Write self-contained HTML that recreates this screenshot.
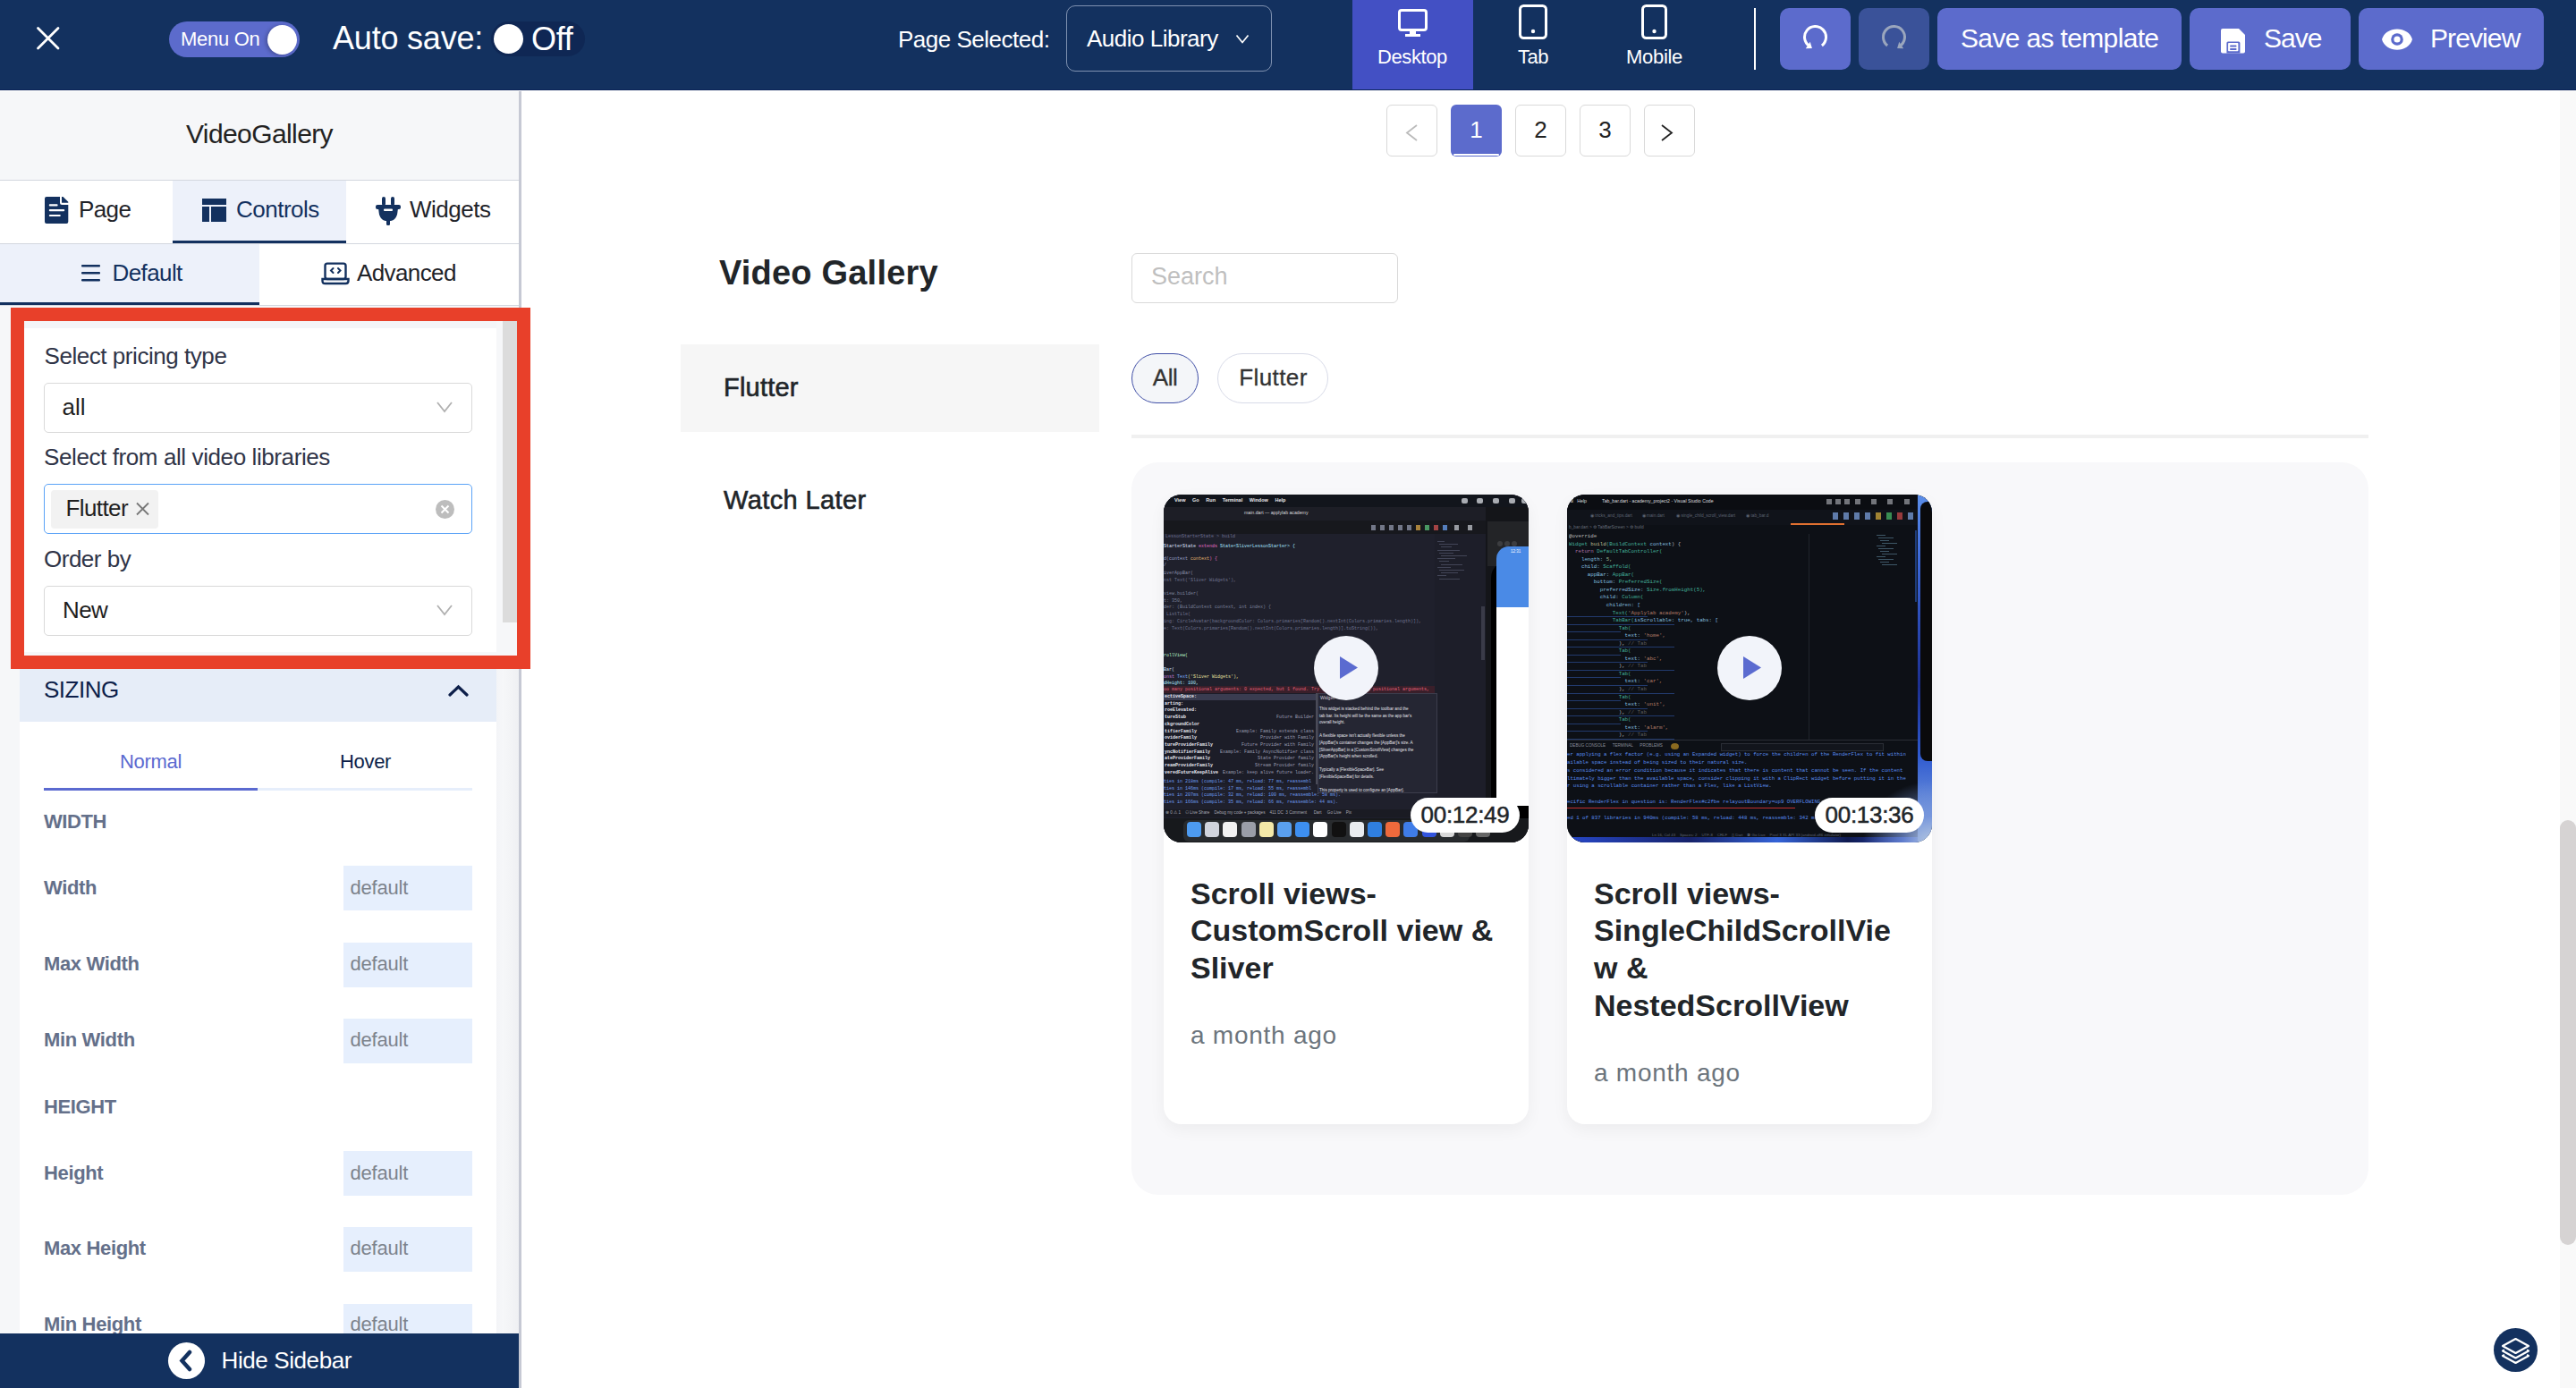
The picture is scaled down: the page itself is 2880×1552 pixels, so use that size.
<!DOCTYPE html>
<html><head><meta charset="utf-8"><title>Video Gallery Editor</title>
<style>
html,body{margin:0;padding:0;}
body{width:2880px;height:1552px;position:relative;overflow:hidden;background:#fff;font-family:"Liberation Sans",sans-serif;}
.t{position:absolute;white-space:nowrap;line-height:1;font-family:"Liberation Sans",sans-serif;}
svg{overflow:visible}
</style></head><body>
<div style="position:absolute;left:0px;top:0px;width:2880px;height:101px;background:#13315f"></div><div style="position:absolute;left:0px;top:100px;width:2880px;height:1px;background:#0a2358"></div><svg style="position:absolute;left:38px;top:27px" width="32" height="32" viewBox="0 0 32 32"><path d="M4.5 4.5 L27 27 M27 4.5 L4.5 27" stroke="#fff" stroke-width="2.8" stroke-linecap="round"/></svg><div style="position:absolute;left:189px;top:24px;width:146px;height:40px;background:#5c6bcc;border-radius:20px"></div><div style="position:absolute;left:299px;top:27.5px;width:33px;height:33.0px;background:#fff;border-radius:50%;box-shadow:-2px 1px 4px rgba(0,0,0,0.25)"></div><div class="t" style="left:202px;top:33.08px;font-size:22px;color:#fff;font-weight:400;letter-spacing:-0.3px;">Menu On</div><div class="t" style="left:372px;top:24.53px;font-size:36px;color:#fff;font-weight:400;letter-spacing:-0.2px;">Auto save:</div><div style="position:absolute;left:549px;top:24px;width:105px;height:39px;background:#0f2754;border-radius:20px"></div><div style="position:absolute;left:552px;top:27px;width:33px;height:33px;background:#fff;border-radius:50%"></div><div class="t" style="left:594px;top:25.53px;font-size:36px;color:#fff;font-weight:400;letter-spacing:-0.3px;">Off</div><div class="t" style="left:1004px;top:30.99px;font-size:26px;color:#fff;font-weight:400;letter-spacing:-0.5px;">Page Selected:</div><div style="position:absolute;left:1192px;top:6px;width:230px;height:74px;border:1.5px solid rgba(200,210,230,0.6);border-radius:10px;box-sizing:border-box"></div><div class="t" style="left:1215px;top:29.99px;font-size:26px;color:#fff;font-weight:400;letter-spacing:-0.5px;">Audio Library</div><svg style="position:absolute;left:1381px;top:37px" width="16" height="14" viewBox="0 0 16 14"><path d="M1.5 2.5 L8 10.5 L14.5 2.5" stroke="#fff" stroke-width="1.7" fill="none"/></svg><div style="position:absolute;left:1512px;top:0px;width:135px;height:100px;background:#4350c4"></div><svg style="position:absolute;left:1560px;top:8px" width="40" height="36" viewBox="0 0 40 36"><rect x="4.5" y="3.5" width="30" height="22" rx="2.5" stroke="#fff" stroke-width="3" fill="none"/><rect x="16" y="26" width="7" height="5" fill="#fff"/><rect x="11" y="30" width="17" height="3" fill="#fff"/></svg><div class="t" style="left:1540px;top:53.08px;font-size:22px;color:#fff;font-weight:400;letter-spacing:-0.4px;">Desktop</div><svg style="position:absolute;left:1696px;top:3px" width="38" height="44" viewBox="0 0 38 44"><rect x="3.5" y="3.5" width="29" height="36" rx="4" stroke="#fff" stroke-width="3" fill="none"/><circle cx="18" cy="32" r="2.2" fill="#fff"/></svg><div class="t" style="left:1697px;top:53.08px;font-size:22px;color:#fff;font-weight:400;letter-spacing:-0.5px;">Tab</div><svg style="position:absolute;left:1833px;top:3px" width="34" height="44" viewBox="0 0 34 44"><rect x="3.5" y="3.5" width="26" height="36" rx="4" stroke="#fff" stroke-width="3" fill="none"/><circle cx="16.5" cy="32" r="2.2" fill="#fff"/></svg><div class="t" style="left:1818px;top:53.08px;font-size:22px;color:#fff;font-weight:400;letter-spacing:-0.3px;">Mobile</div><div style="position:absolute;left:1961px;top:9px;width:2px;height:69px;background:#fff"></div><div style="position:absolute;left:1990px;top:9px;width:79px;height:69px;background:#5c6bcc;border-radius:10px"></div><svg style="position:absolute;left:2012px;top:26px" width="36" height="34" viewBox="0 0 36 34"><path d="M24.9 24.96 A12 12 0 1 0 10.96 25.56" stroke="#fff" stroke-width="3" fill="none"/><path d="M13.9 28 L11.73 20.69 L6.83 28.25 Z" fill="#fff"/></svg><div style="position:absolute;left:2078px;top:9px;width:79px;height:69px;background:#3a5299;border-radius:10px"></div><svg style="position:absolute;left:2100px;top:26px" width="36" height="34" viewBox="0 0 36 34"><path d="M10.1 24.96 A12 12 0 1 1 24.04 25.56" stroke="#9aa6bd" stroke-width="3" fill="none"/><path d="M21.1 28 L23.27 20.69 L28.17 28.25 Z" fill="#9aa6bd"/></svg><div style="position:absolute;left:2166px;top:9px;width:273px;height:69px;background:#5c6bcc;border-radius:10px"></div><div class="t" style="left:2192px;top:28.11px;font-size:30px;color:#fff;font-weight:400;letter-spacing:-0.65px;">Save as template</div><div style="position:absolute;left:2448px;top:9px;width:180px;height:69px;background:#5c6bcc;border-radius:10px"></div><svg style="position:absolute;left:2483px;top:32px" width="28" height="28" viewBox="0 0 28 28"><path d="M0 2 Q0 0 2 0 L20 0 L27 7 L27 25.5 Q27 27.5 25 27.5 L2 27.5 Q0 27.5 0 25.5 Z" fill="#fff"/><path d="M6.4 27.6 L6.4 16 Q6.4 14.5 8 14.5 L19.8 14.5 Q21.4 14.5 21.4 16 L21.4 27.6 Z" fill="#5c6bcc"/><rect x="8.1" y="16" width="11.3" height="9.3" rx="0.8" fill="#fff"/><rect x="10.2" y="18.6" width="7.2" height="1.8" rx="0.5" fill="#5c6bcc"/><rect x="10.2" y="22.1" width="7.2" height="1.8" rx="0.5" fill="#5c6bcc"/></svg><div class="t" style="left:2531px;top:27.90px;font-size:30px;color:#fff;font-weight:400;letter-spacing:-1px;">Save</div><div style="position:absolute;left:2637px;top:9px;width:207px;height:69px;background:#5c6bcc;border-radius:10px"></div><svg style="position:absolute;left:2661px;top:30px" width="38" height="28" viewBox="0 0 38 28"><path d="M2 14 C6 -1.5 32 -1.5 36 14 C32 29.5 6 29.5 2 14 Z" fill="#fff"/><circle cx="19" cy="14" r="6.8" fill="#5c6bcc"/><circle cx="19" cy="14" r="3.6" fill="#fff"/></svg><div class="t" style="left:2717px;top:27.90px;font-size:30px;color:#fff;font-weight:400;letter-spacing:-0.9px;">Preview</div><div style="position:absolute;left:0px;top:101px;width:583px;height:1px;background:#fff"></div><div style="position:absolute;left:0px;top:102px;width:580px;height:1450px;background:#f6f7f9"></div><div style="position:absolute;left:580px;top:102px;width:3px;height:1450px;background:#c6c9d4"></div><div class="t" style="left:290px;transform:translateX(-50%);top:134.60px;font-size:30px;color:#222;font-weight:400;letter-spacing:-0.6px;">VideoGallery</div><div style="position:absolute;left:0px;top:201px;width:580px;height:1px;background:#d3d7df"></div><div style="position:absolute;left:0px;top:202px;width:580px;height:70px;background:#fff"></div><div style="position:absolute;left:193px;top:202px;width:194px;height:70px;background:#edf1fa"></div><div style="position:absolute;left:193px;top:269px;width:194px;height:3px;background:#13315f"></div><div style="position:absolute;left:0px;top:272px;width:580px;height:1px;background:#d3d7df"></div><svg style="position:absolute;left:50px;top:220px" width="27" height="30" viewBox="0 0 27 30"><path d="M2 0 L17 0 L17 6.5 Q17 9 19.5 9 L26.3 9 L26.3 28 Q26.3 30 24.3 30 L2 30 Q0 30 0 28 L0 2 Q0 0 2 0 Z" fill="#13315f"/><path d="M19 0 L20.5 0 L26.3 5.8 L26.3 6.8 L19 6.8 Z" fill="#13315f"/><rect x="4.8" y="8.2" width="9.8" height="2.2" rx="1" fill="#fff"/><rect x="4.8" y="14.1" width="17.4" height="2.2" rx="1" fill="#fff"/><rect x="4.8" y="19.9" width="13" height="2.2" rx="1" fill="#fff"/></svg><div class="t" style="left:88px;top:221.19px;font-size:26px;color:#1f2329;font-weight:400;letter-spacing:-0.6px;">Page</div><svg style="position:absolute;left:226px;top:222px" width="27" height="26" viewBox="0 0 27 26"><rect x="0" y="0" width="27" height="7" fill="#13315f"/><rect x="0" y="9" width="8" height="17" fill="#13315f"/><rect x="10" y="9" width="17" height="17" fill="#13315f"/></svg><div class="t" style="left:264px;top:220.59px;font-size:26px;color:#13315f;font-weight:400;letter-spacing:-0.5px;">Controls</div><svg style="position:absolute;left:420px;top:220px" width="29" height="32" viewBox="0 0 29 32"><rect x="7" y="0" width="4" height="10" rx="2" fill="#13315f"/><rect x="17" y="0" width="4" height="10" rx="2" fill="#13315f"/><rect x="0" y="9" width="28" height="5" rx="2" fill="#13315f"/><path d="M3 13 L25 13 L24 20 Q22 26 17 27 L11 27 Q6 26 4 20 Z" fill="#13315f"/><rect x="12" y="25" width="4" height="7" rx="1.5" fill="#13315f"/><rect x="9" y="13.5" width="10" height="2.5" rx="1" fill="#fff"/></svg><div class="t" style="left:458px;top:220.59px;font-size:26px;color:#1f2329;font-weight:400;letter-spacing:-0.5px;">Widgets</div><div style="position:absolute;left:0px;top:273px;width:580px;height:68px;background:#fff"></div><div style="position:absolute;left:0px;top:273px;width:290px;height:68px;background:#edf1fa"></div><div style="position:absolute;left:0px;top:338px;width:290px;height:3px;background:#13315f"></div><div style="position:absolute;left:0px;top:341px;width:580px;height:1px;background:#d3d7df"></div><svg style="position:absolute;left:90px;top:295px" width="24" height="21" viewBox="0 0 24 21"><rect x="1" y="1" width="21" height="2.6" rx="1" fill="#13315f"/><rect x="1" y="9" width="21" height="2.6" rx="1" fill="#13315f"/><rect x="1" y="17" width="21" height="2.6" rx="1" fill="#13315f"/></svg><div class="t" style="left:125.5px;top:291.99px;font-size:26px;color:#13315f;font-weight:400;letter-spacing:-0.6px;">Default</div><svg style="position:absolute;left:359px;top:291px" width="32" height="28" viewBox="0 0 32 28"><rect x="4.5" y="3.6" width="23" height="17.4" rx="2.5" stroke="#13315f" stroke-width="2.4" fill="none"/><path d="M1.5 21 L30.5 21 L30.5 23 Q30.5 26 27.5 26 L4.5 26 Q1.5 26 1.5 23 Z" stroke="#13315f" stroke-width="2.4" fill="none"/><path d="M13.5 9 L11 11.5 L13.5 14 M19 9 L21.5 11.5 L19 14" stroke="#13315f" stroke-width="2" fill="none" stroke-linecap="round"/></svg><div class="t" style="left:399px;top:291.99px;font-size:26px;color:#1f2329;font-weight:400;letter-spacing:-0.6px;">Advanced</div><div style="position:absolute;left:22px;top:359px;width:533px;height:8px;background:#f4f5f8"></div><div style="position:absolute;left:22px;top:367px;width:533px;height:362px;background:#fff"></div><div style="position:absolute;left:562px;top:350px;width:18px;height:346px;background:#dcdcdc"></div><div class="t" style="left:49.5px;top:384.99px;font-size:26px;color:#2f3447;font-weight:400;letter-spacing:-0.45px;">Select pricing type</div><div style="position:absolute;left:49px;top:428px;width:479px;height:56px;border:1.5px solid #d9d9d9;border-radius:5px;box-sizing:border-box;background:#fff"></div><div class="t" style="left:69.5px;top:441.99px;font-size:26px;color:#1f1f1f;font-weight:400;letter-spacing:0px;">all</div><svg style="position:absolute;left:487px;top:447px" width="20" height="17" viewBox="0 0 20 17"><path d="M2 3 L10 13 L18 3" stroke="#b0b0b0" stroke-width="1.8" fill="none"/></svg><div class="t" style="left:49px;top:498.19px;font-size:26px;color:#2f3447;font-weight:400;letter-spacing:-0.4px;">Select from all video libraries</div><div style="position:absolute;left:49px;top:541px;width:479px;height:56px;border:1.5px solid #5ba3f7;border-radius:5px;box-sizing:border-box;background:#fff"></div><div style="position:absolute;left:57px;top:548px;width:120px;height:43px;background:#f2f2f2;border-radius:4px"></div><div class="t" style="left:73.5px;top:554.99px;font-size:26px;color:#1f1f1f;font-weight:400;letter-spacing:-0.6px;">Flutter</div><svg style="position:absolute;left:151px;top:561px" width="18" height="16" viewBox="0 0 18 16"><path d="M2 1.5 L15 14.5 M15 1.5 L2 14.5" stroke="#777" stroke-width="1.8"/></svg><svg style="position:absolute;left:486px;top:558px" width="23" height="23" viewBox="0 0 23 23"><circle cx="11.5" cy="11.5" r="10.5" fill="#bdbdbd"/><path d="M7.5 7.5 L15.5 15.5 M15.5 7.5 L7.5 15.5" stroke="#fff" stroke-width="2"/></svg><div class="t" style="left:49px;top:612.19px;font-size:26px;color:#2f3447;font-weight:400;letter-spacing:-0.5px;">Order by</div><div style="position:absolute;left:49px;top:655px;width:479px;height:56px;border:1.5px solid #d9d9d9;border-radius:5px;box-sizing:border-box;background:#fff"></div><div class="t" style="left:70px;top:669.39px;font-size:26px;color:#1f1f1f;font-weight:400;letter-spacing:-0.6px;">New</div><svg style="position:absolute;left:487px;top:674px" width="20" height="17" viewBox="0 0 20 17"><path d="M2 3 L10 13 L18 3" stroke="#b0b0b0" stroke-width="1.8" fill="none"/></svg><div style="position:absolute;left:22px;top:748px;width:533px;height:59px;background:#e6edf8"></div><div class="t" style="left:49px;top:758.29px;font-size:26px;color:#0d1f4a;font-weight:400;letter-spacing:-0.5px;">SIZING</div><svg style="position:absolute;left:500px;top:763px" width="25" height="18" viewBox="0 0 25 18"><path d="M3 14 L12.5 5 L22 14" stroke="#0d1f4a" stroke-width="3.2" fill="none" stroke-linecap="round"/></svg><div style="position:absolute;left:555px;top:748px;width:25px;height:743px;background:linear-gradient(90deg,#f3f4f7,#f6f7f9 30%,#eff0f3)"></div><div style="position:absolute;left:22px;top:807px;width:533px;height:745px;background:#fff"></div><div class="t" style="left:168.5px;transform:translateX(-50%);top:841.38px;font-size:22px;color:#5b6ad0;font-weight:400;letter-spacing:-0.3px;">Normal</div><div class="t" style="left:408.5px;transform:translateX(-50%);top:841.38px;font-size:22px;color:#0d1f4a;font-weight:400;letter-spacing:-0.3px;">Hover</div><div style="position:absolute;left:49px;top:881px;width:479px;height:3px;background:#e6eefb"></div><div style="position:absolute;left:49px;top:881px;width:239px;height:3px;background:#5b6ad0"></div><div class="t" style="left:49px;top:907.68px;font-size:22px;color:#64708a;font-weight:700;letter-spacing:-0.4px;">WIDTH</div><div class="t" style="left:49px;top:981.98px;font-size:22px;color:#64708a;font-weight:700;letter-spacing:-0.35px;">Width</div><div style="position:absolute;left:384px;top:968px;width:144px;height:50px;background:#e6effd"></div><div class="t" style="left:391.5px;top:981.98px;font-size:22px;color:#7d838c;font-weight:400;letter-spacing:-0.2px;">default</div><div class="t" style="left:49px;top:1066.98px;font-size:22px;color:#64708a;font-weight:700;letter-spacing:-0.35px;">Max Width</div><div style="position:absolute;left:384px;top:1054px;width:144px;height:50px;background:#e6effd"></div><div class="t" style="left:391.5px;top:1066.98px;font-size:22px;color:#7d838c;font-weight:400;letter-spacing:-0.2px;">default</div><div class="t" style="left:49px;top:1151.98px;font-size:22px;color:#64708a;font-weight:700;letter-spacing:-0.35px;">Min Width</div><div style="position:absolute;left:384px;top:1139px;width:144px;height:50px;background:#e6effd"></div><div class="t" style="left:391.5px;top:1151.98px;font-size:22px;color:#7d838c;font-weight:400;letter-spacing:-0.2px;">default</div><div class="t" style="left:49px;top:1226.68px;font-size:22px;color:#64708a;font-weight:700;letter-spacing:-0.4px;">HEIGHT</div><div class="t" style="left:49px;top:1300.88px;font-size:22px;color:#64708a;font-weight:700;letter-spacing:-0.35px;">Height</div><div style="position:absolute;left:384px;top:1287px;width:144px;height:50px;background:#e6effd"></div><div class="t" style="left:391.5px;top:1300.88px;font-size:22px;color:#7d838c;font-weight:400;letter-spacing:-0.2px;">default</div><div class="t" style="left:49px;top:1385.38px;font-size:22px;color:#64708a;font-weight:700;letter-spacing:-0.35px;">Max Height</div><div style="position:absolute;left:384px;top:1372px;width:144px;height:50px;background:#e6effd"></div><div class="t" style="left:391.5px;top:1385.38px;font-size:22px;color:#7d838c;font-weight:400;letter-spacing:-0.2px;">default</div><div class="t" style="left:49px;top:1469.88px;font-size:22px;color:#64708a;font-weight:700;letter-spacing:-0.35px;">Min Height</div><div style="position:absolute;left:384px;top:1458px;width:144px;height:50px;background:#e6effd"></div><div class="t" style="left:391.5px;top:1469.88px;font-size:22px;color:#7d838c;font-weight:400;letter-spacing:-0.2px;">default</div><div style="position:absolute;left:0px;top:1491px;width:580px;height:61px;background:#13315f"></div><svg style="position:absolute;left:187px;top:1500px" width="43" height="43" viewBox="0 0 43 43"><circle cx="21.5" cy="21.5" r="20.5" fill="#fff"/><path d="M25 12 L16.5 21.5 L25 31" stroke="#13315f" stroke-width="4.5" fill="none" stroke-linecap="round"/></svg><div class="t" style="left:247.5px;top:1507.69px;font-size:26px;color:#fff;font-weight:400;letter-spacing:-0.4px;">Hide Sidebar</div><div style="position:absolute;left:583px;top:101px;width:2279px;height:1451px;background:#fff"></div><div style="position:absolute;left:2862px;top:101px;width:18px;height:1451px;background:#f9f9f9"></div><div style="position:absolute;left:2862px;top:917px;width:18px;height:475px;background:#d6d3d3;border-radius:9px"></div><div style="position:absolute;left:1550px;top:117px;width:57px;height:58px;border:1.5px solid #d9d9d9;border-radius:6px;box-sizing:border-box;background:#fff"></div><div style="position:absolute;left:1622px;top:117px;width:57px;height:58px;background:#5c6bcc;border-radius:6px;overflow:hidden"></div><div style="position:absolute;left:1625px;top:171.5px;width:51px;height:2.0px;background:#fff;border-radius:2px"></div><div style="position:absolute;left:1694px;top:117px;width:57px;height:58px;border:1.5px solid #d9d9d9;border-radius:6px;box-sizing:border-box;background:#fff"></div><div style="position:absolute;left:1766px;top:117px;width:57px;height:58px;border:1.5px solid #d9d9d9;border-radius:6px;box-sizing:border-box;background:#fff"></div><div style="position:absolute;left:1838px;top:117px;width:57px;height:58px;border:1.5px solid #d9d9d9;border-radius:6px;box-sizing:border-box;background:#fff"></div><svg style="position:absolute;left:1570px;top:138px" width="16" height="21" viewBox="0 0 16 21"><path d="M14 2 L3 10.5 L14 19" stroke="#bbb" stroke-width="1.8" fill="none"/></svg><svg style="position:absolute;left:1856px;top:138px" width="16" height="21" viewBox="0 0 16 21"><path d="M2 2 L13 10.5 L2 19" stroke="#222" stroke-width="1.8" fill="none"/></svg><div class="t" style="left:1650.5px;transform:translateX(-50%);top:132.29px;font-size:26px;color:#fff;font-weight:400;letter-spacing:0px;">1</div><div class="t" style="left:1722.5px;transform:translateX(-50%);top:132.29px;font-size:26px;color:#222;font-weight:400;letter-spacing:0px;">2</div><div class="t" style="left:1794.5px;transform:translateX(-50%);top:132.29px;font-size:26px;color:#222;font-weight:400;letter-spacing:0px;">3</div><div class="t" style="left:804px;top:285.63px;font-size:38px;color:#212529;font-weight:700;letter-spacing:0.2px;">Video Gallery</div><div style="position:absolute;left:1265px;top:283px;width:298px;height:56px;border:1.5px solid #d9d9d9;border-radius:6px;box-sizing:border-box"></div><div class="t" style="left:1287px;top:296.14px;font-size:27px;color:#bfbfbf;font-weight:400;letter-spacing:0px;">Search</div><div style="position:absolute;left:761px;top:385px;width:468px;height:98px;background:#f6f6f6"></div><div class="t" style="left:809px;top:419.15px;font-size:29px;color:#212529;font-weight:400;letter-spacing:0.2px;-webkit-text-stroke:0.6px #212529;">Flutter</div><div class="t" style="left:809px;top:544.85px;font-size:29px;color:#212529;font-weight:400;letter-spacing:0.4px;-webkit-text-stroke:0.6px #212529;">Watch Later</div><div style="position:absolute;left:1265px;top:395px;width:75px;height:56px;border:1.5px solid #3f4ea6;border-radius:28px;box-sizing:border-box;background:#f4f6f9"></div><div class="t" style="left:1302.5px;transform:translateX(-50%);top:409.09px;font-size:26px;color:#333;font-weight:400;letter-spacing:-0.5px;-webkit-text-stroke:0.3px #333;">All</div><div style="position:absolute;left:1361px;top:395px;width:124px;height:56px;border:1.5px solid #d8dbe8;border-radius:28px;box-sizing:border-box;background:#fff"></div><div class="t" style="left:1423.5px;transform:translateX(-50%);top:409.49px;font-size:26px;color:#333;font-weight:400;letter-spacing:0.4px;-webkit-text-stroke:0.3px #333;">Flutter</div><div style="position:absolute;left:1265px;top:486px;width:1383px;height:4px;background:#f0f0f0"></div><div style="position:absolute;left:1265px;top:517px;width:1383px;height:819px;background:#f8f8fa;border-radius:30px"></div><div style="position:absolute;left:1301px;top:553px;width:408px;height:704px;background:#fff;border-radius:20px;box-shadow:0 6px 18px rgba(0,0,0,0.05)"></div><div style="position:absolute;left:1301px;top:553px;width:408px;height:389px;border-radius:20px;overflow:hidden;background:#1c1e29"><div style="position:absolute;left:0px;top:0px;width:408px;height:389px;background:#1e1f2b;"></div><div style="position:absolute;left:0px;top:0px;width:408px;height:14px;background:#12151c;"></div><div style="position:absolute;left:12px;top:4px;font:5.5px/1 'Liberation Sans',sans-serif;white-space:pre;color:#e8e8ea;font-weight:bold">View     Go     Run     Terminal     Window     Help</div><div style="position:absolute;left:333px;top:4px;width:7px;height:6px;background:#cfd2d8;border-radius:2px;opacity:0.8"></div><div style="position:absolute;left:350px;top:4px;width:7px;height:6px;background:#cfd2d8;border-radius:2px;opacity:0.8"></div><div style="position:absolute;left:368px;top:4px;width:7px;height:6px;background:#cfd2d8;border-radius:2px;opacity:0.8"></div><div style="position:absolute;left:386px;top:4px;width:7px;height:6px;background:#cfd2d8;border-radius:2px;opacity:0.8"></div><div style="position:absolute;left:400px;top:4px;width:7px;height:6px;background:#cfd2d8;border-radius:2px;opacity:0.8"></div><div style="position:absolute;left:0px;top:14px;width:360px;height:15px;background:#1d1e26;"></div><div style="position:absolute;left:90px;top:18px;font:5.2px/1 'Liberation Sans',sans-serif;white-space:pre;color:#d8d8dc;">main.dart — applylab academy</div><div style="position:absolute;left:0px;top:29px;width:360px;height:15px;background:#17181d;"></div><div style="position:absolute;left:232px;top:34px;width:5px;height:6px;background:#9aa0b5;opacity:0.7"></div><div style="position:absolute;left:242px;top:34px;width:5px;height:6px;background:#9aa0b5;opacity:0.7"></div><div style="position:absolute;left:252px;top:34px;width:5px;height:6px;background:#9aa0b5;opacity:0.7"></div><div style="position:absolute;left:262px;top:34px;width:5px;height:6px;background:#9aa0b5;opacity:0.7"></div><div style="position:absolute;left:272px;top:34px;width:5px;height:6px;background:#9aa0b5;opacity:0.7"></div><div style="position:absolute;left:282px;top:34px;width:5px;height:6px;background:#e8b04a;opacity:0.7"></div><div style="position:absolute;left:292px;top:34px;width:5px;height:6px;background:#5fcf80;opacity:0.7"></div><div style="position:absolute;left:302px;top:34px;width:5px;height:6px;background:#e05555;opacity:0.7"></div><div style="position:absolute;left:312px;top:34px;width:5px;height:6px;background:#6fa8ff;opacity:0.7"></div><div style="position:absolute;left:325px;top:34px;width:5px;height:6px;background:#cfd2d8;opacity:0.7"></div><div style="position:absolute;left:340px;top:34px;width:5px;height:6px;background:#cfd2d8;opacity:0.7"></div><div style="position:absolute;left:0px;top:44px;width:303px;height:312px;background:#1f202c;"></div><div style="position:absolute;left:2px;top:45px;font:5px/1 'Liberation Mono',monospace;white-space:pre;color:#6c6f8c;">LessonStarterState &gt; build</div><div style="position:absolute;left:0px;top:56px;font:5px/1 'Liberation Mono',monospace;white-space:pre;color:#dfe3ff;">StarterState </div><div style="position:absolute;left:39.0px;top:56px;font:5px/1 'Liberation Mono',monospace;white-space:pre;color:#e36fc6;">extends </div><div style="position:absolute;left:63.0px;top:56px;font:5px/1 'Liberation Mono',monospace;white-space:pre;color:#a9e6ff;">State&lt;SliverLessonStarter&gt; {</div><div style="position:absolute;left:0px;top:70px;font:5px/1 'Liberation Mono',monospace;white-space:pre;color:#9aa0c8;">d(context </div><div style="position:absolute;left:30.0px;top:70px;font:5px/1 'Liberation Mono',monospace;white-space:pre;color:#e5b76e;">context</div><div style="position:absolute;left:51.0px;top:70px;font:5px/1 'Liberation Mono',monospace;white-space:pre;color:#e36fc6;">) {</div><div style="position:absolute;left:0px;top:77px;font:5px/1 'Liberation Mono',monospace;white-space:pre;color:#9aa0c8;">/</div><div style="position:absolute;left:0px;top:86px;font:5px/1 'Liberation Mono',monospace;white-space:pre;color:#8b90aa;">iverAppBar(</div><div style="position:absolute;left:0px;top:94px;font:5px/1 'Liberation Mono',monospace;white-space:pre;color:#6f7490;">nst Text(&#x27;Sliver Widgets&#x27;),</div><div style="position:absolute;left:0px;top:109px;font:5px/1 'Liberation Mono',monospace;white-space:pre;color:#7b809a;">view.builder(</div><div style="position:absolute;left:0px;top:117px;font:5px/1 'Liberation Mono',monospace;white-space:pre;color:#7b809a;">t: 350,</div><div style="position:absolute;left:0px;top:124px;font:5px/1 'Liberation Mono',monospace;white-space:pre;color:#7b809a;">der: (BuildContext context, int index) {</div><div style="position:absolute;left:0px;top:132px;font:5px/1 'Liberation Mono',monospace;white-space:pre;color:#6f7490;"> ListTile(</div><div style="position:absolute;left:0px;top:140px;font:5px/1 'Liberation Mono',monospace;white-space:pre;color:#6f7490;">ing: CircleAvatar(backgroundColor: Colors.primaries[Random().nextInt(Colors.primaries.length)]),</div><div style="position:absolute;left:0px;top:148px;font:5px/1 'Liberation Mono',monospace;white-space:pre;color:#6f7490;">e: Text(Colors.primaries[Random().nextInt(Colors.primaries.length)].toString()),</div><div style="position:absolute;left:0px;top:178px;font:5px/1 'Liberation Mono',monospace;white-space:pre;color:#b9f5c8;">rollView(</div><div style="position:absolute;left:0px;top:194px;font:5px/1 'Liberation Mono',monospace;white-space:pre;color:#cfe3ff;">Bar(</div><div style="position:absolute;left:0px;top:202px;font:5px/1 'Liberation Mono',monospace;white-space:pre;color:#c07cd6;">onst </div><div style="position:absolute;left:15.0px;top:202px;font:5px/1 'Liberation Mono',monospace;white-space:pre;color:#7fb0ff;">Text</div><div style="position:absolute;left:27.0px;top:202px;font:5px/1 'Liberation Mono',monospace;white-space:pre;color:#e6e0a0;">(&#x27;Sliver Widgets&#x27;),</div><div style="position:absolute;left:0px;top:209px;font:5px/1 'Liberation Mono',monospace;white-space:pre;color:#b0e8ff;">dHeight: 100,</div><div style="position:absolute;left:303px;top:44px;width:57px;height:312px;background:#1d1e29;"></div><div style="position:absolute;left:306px;top:52.0px;width:8px;height:1px;background:#8a8fb0;opacity:0.35"></div><div style="position:absolute;left:308px;top:55.2px;width:21px;height:1px;background:#8a8fb0;opacity:0.35"></div><div style="position:absolute;left:310px;top:58.4px;width:12px;height:1px;background:#8a8fb0;opacity:0.35"></div><div style="position:absolute;left:306px;top:61.6px;width:25px;height:1px;background:#8a8fb0;opacity:0.35"></div><div style="position:absolute;left:308px;top:64.8px;width:16px;height:1px;background:#8a8fb0;opacity:0.35"></div><div style="position:absolute;left:310px;top:68.0px;width:29px;height:1px;background:#8a8fb0;opacity:0.35"></div><div style="position:absolute;left:306px;top:71.2px;width:20px;height:1px;background:#8a8fb0;opacity:0.35"></div><div style="position:absolute;left:308px;top:74.4px;width:11px;height:1px;background:#8a8fb0;opacity:0.35"></div><div style="position:absolute;left:310px;top:77.6px;width:24px;height:1px;background:#8a8fb0;opacity:0.35"></div><div style="position:absolute;left:306px;top:80.8px;width:15px;height:1px;background:#8a8fb0;opacity:0.35"></div><div style="position:absolute;left:308px;top:84.0px;width:28px;height:1px;background:#8a8fb0;opacity:0.35"></div><div style="position:absolute;left:310px;top:87.2px;width:19px;height:1px;background:#8a8fb0;opacity:0.35"></div><div style="position:absolute;left:306px;top:90.4px;width:10px;height:1px;background:#8a8fb0;opacity:0.35"></div><div style="position:absolute;left:308px;top:93.6px;width:23px;height:1px;background:#8a8fb0;opacity:0.35"></div><div style="position:absolute;left:355px;top:125px;width:4px;height:60px;background:#3a3b48;"></div><div style="position:absolute;left:0px;top:214px;width:303px;height:8px;background:#3a1f2a;"></div><div style="position:absolute;left:0px;top:216px;font:5px/1 'Liberation Mono',monospace;white-space:pre;color:#e0607a;">oo many positional arguments: 0 expected, but 1 found. Try removing the extra positional arguments,</div><div style="position:absolute;left:0px;top:222px;width:170px;height:102px;background:#1c1d28;"></div><div style="position:absolute;left:0px;top:223px;width:170px;height:7px;background:#3a3c50;"></div><div style="position:absolute;left:1px;top:224.0px;font:5px/1 'Liberation Mono',monospace;white-space:pre;color:#e8e8f0;font-weight:bold">ectiveSpace:</div><div style="position:absolute;left:1px;top:231.7px;font:5px/1 'Liberation Mono',monospace;white-space:pre;color:#e8e8f0;font-weight:bold">arting:</div><div style="position:absolute;left:1px;top:239.4px;font:5px/1 'Liberation Mono',monospace;white-space:pre;color:#e8e8f0;font-weight:bold">roeElevated:</div><div style="position:absolute;left:1px;top:247.1px;font:5px/1 'Liberation Mono',monospace;white-space:pre;color:#e8e8f0;font-weight:bold">tureStub</div><div style="position:absolute;left:126px;top:247.1px;font:5px/1 'Liberation Mono',monospace;white-space:pre;color:#9a9cb0;">Future Builder</div><div style="position:absolute;left:1px;top:254.8px;font:5px/1 'Liberation Mono',monospace;white-space:pre;color:#e8e8f0;font-weight:bold">ckgroundColor</div><div style="position:absolute;left:1px;top:262.5px;font:5px/1 'Liberation Mono',monospace;white-space:pre;color:#e8e8f0;font-weight:bold">tifierFamily</div><div style="position:absolute;left:81px;top:262.5px;font:5px/1 'Liberation Mono',monospace;white-space:pre;color:#9a9cb0;">Example: Family extends class</div><div style="position:absolute;left:1px;top:270.2px;font:5px/1 'Liberation Mono',monospace;white-space:pre;color:#e8e8f0;font-weight:bold">oviderFamily</div><div style="position:absolute;left:108px;top:270.2px;font:5px/1 'Liberation Mono',monospace;white-space:pre;color:#9a9cb0;">Provider with Family</div><div style="position:absolute;left:1px;top:277.9px;font:5px/1 'Liberation Mono',monospace;white-space:pre;color:#e8e8f0;font-weight:bold">tureProviderFamily</div><div style="position:absolute;left:87px;top:277.9px;font:5px/1 'Liberation Mono',monospace;white-space:pre;color:#9a9cb0;">Future Provider with Family</div><div style="position:absolute;left:1px;top:285.6px;font:5px/1 'Liberation Mono',monospace;white-space:pre;color:#e8e8f0;font-weight:bold">yncNotifierFamily</div><div style="position:absolute;left:63px;top:285.6px;font:5px/1 'Liberation Mono',monospace;white-space:pre;color:#9a9cb0;">Example: Family AsyncNotifier class</div><div style="position:absolute;left:1px;top:293.3px;font:5px/1 'Liberation Mono',monospace;white-space:pre;color:#e8e8f0;font-weight:bold">ateProviderFamily</div><div style="position:absolute;left:105px;top:293.3px;font:5px/1 'Liberation Mono',monospace;white-space:pre;color:#9a9cb0;">State Provider family</div><div style="position:absolute;left:1px;top:301.0px;font:5px/1 'Liberation Mono',monospace;white-space:pre;color:#e8e8f0;font-weight:bold">reamProviderFamily</div><div style="position:absolute;left:102px;top:301.0px;font:5px/1 'Liberation Mono',monospace;white-space:pre;color:#9a9cb0;">Stream Provider family</div><div style="position:absolute;left:1px;top:308.7px;font:5px/1 'Liberation Mono',monospace;white-space:pre;color:#e8e8f0;font-weight:bold">veredFutureKeepAlive</div><div style="position:absolute;left:66px;top:308.7px;font:5px/1 'Liberation Mono',monospace;white-space:pre;color:#9a9cb0;">Example: keep alive future loader.</div><div style="position:absolute;left:170px;top:222px;width:2px;height:102px;background:#4a4b58;"></div><div style="position:absolute;left:172px;top:222px;width:134px;height:112px;background:#252633;border:1px solid #3c3d4c;box-sizing:border-box"></div><div style="position:absolute;left:175px;top:225px;font:5px/1 'Liberation Sans',sans-serif;white-space:pre;color:#d0d0d8;">Widget</div><div style="position:absolute;left:174px;top:238.0px;font:4.6px/1 'Liberation Sans',sans-serif;white-space:pre;color:#e4e4ea;">This widget is stacked behind the toolbar and the</div><div style="position:absolute;left:174px;top:245.6px;font:4.6px/1 'Liberation Sans',sans-serif;white-space:pre;color:#e4e4ea;">tab bar. Its height will be the same as the app bar&#x27;s</div><div style="position:absolute;left:174px;top:253.2px;font:4.6px/1 'Liberation Sans',sans-serif;white-space:pre;color:#e4e4ea;">overall height.</div><div style="position:absolute;left:174px;top:260.8px;font:4.6px/1 'Liberation Sans',sans-serif;white-space:pre;color:#e4e4ea;"></div><div style="position:absolute;left:174px;top:268.4px;font:4.6px/1 'Liberation Sans',sans-serif;white-space:pre;color:#e4e4ea;">A flexible space isn&#x27;t actually flexible unless the</div><div style="position:absolute;left:174px;top:276.0px;font:4.6px/1 'Liberation Sans',sans-serif;white-space:pre;color:#e4e4ea;">[AppBar]&#x27;s container changes the [AppBar]&#x27;s size. A</div><div style="position:absolute;left:174px;top:283.6px;font:4.6px/1 'Liberation Sans',sans-serif;white-space:pre;color:#e4e4ea;">[SliverAppBar] in a [CustomScrollView] changes the</div><div style="position:absolute;left:174px;top:291.2px;font:4.6px/1 'Liberation Sans',sans-serif;white-space:pre;color:#e4e4ea;">[AppBar]&#x27;s height when scrolled.</div><div style="position:absolute;left:174px;top:298.8px;font:4.6px/1 'Liberation Sans',sans-serif;white-space:pre;color:#e4e4ea;"></div><div style="position:absolute;left:174px;top:306.4px;font:4.6px/1 'Liberation Sans',sans-serif;white-space:pre;color:#e4e4ea;">Typically a [FlexibleSpaceBar]. See</div><div style="position:absolute;left:174px;top:314.0px;font:4.6px/1 'Liberation Sans',sans-serif;white-space:pre;color:#e4e4ea;">[FlexibleSpaceBar] for details.</div><div style="position:absolute;left:174px;top:321.6px;font:4.6px/1 'Liberation Sans',sans-serif;white-space:pre;color:#e4e4ea;"></div><div style="position:absolute;left:174px;top:329.2px;font:4.6px/1 'Liberation Sans',sans-serif;white-space:pre;color:#e4e4ea;">This property is used to configure an [AppBar].</div><div style="position:absolute;left:0px;top:319.0px;font:5px/1 'Liberation Mono',monospace;white-space:pre;color:#6f9cf0;">ties in 218ms (compile: 47 ms, reload: 77 ms, reassembl</div><div style="position:absolute;left:0px;top:326.6px;font:5px/1 'Liberation Mono',monospace;white-space:pre;color:#6f9cf0;">ties in 146ms (compile: 17 ms, reload: 55 ms, reassembl</div><div style="position:absolute;left:0px;top:334.2px;font:5px/1 'Liberation Mono',monospace;white-space:pre;color:#6f9cf0;">ties in 207ms (compile: 32 ms, reload: 100 ms, reassemble: 58 ms).</div><div style="position:absolute;left:0px;top:341.8px;font:5px/1 'Liberation Mono',monospace;white-space:pre;color:#6f9cf0;">ties in 166ms (compile: 35 ms, reload: 66 ms, reassemble: 44 ms).</div><div style="position:absolute;left:0px;top:352px;width:360px;height:9px;background:#1a1b23;"></div><div style="position:absolute;left:2px;top:354px;font:4.6px/1 'Liberation Sans',sans-serif;white-space:pre;color:#a8a9b4;">⊗ 0 ⚠ 1    ⚇ Live Share    Debug my code + packages    411 DC  3 Comment      Dart     Go Live    Pix</div><div style="position:absolute;left:360px;top:14px;width:48px;height:348px;background:#141519;"></div><div style="position:absolute;left:362px;top:30px;width:46px;height:50px;background:#232427;"></div><div style="position:absolute;left:373px;top:52px;width:6px;height:6px;background:#3c3d40;border-radius:50%"></div><div style="position:absolute;left:381px;top:52px;width:6px;height:6px;background:#3c3d40;border-radius:50%"></div><div style="position:absolute;left:389px;top:52px;width:6px;height:6px;background:#3c3d40;border-radius:50%"></div><div style="position:absolute;left:366px;top:75px;width:42px;height:282px;background:#000;border-radius:18px 0 0 18px"></div><div style="position:absolute;left:372px;top:58px;width:36px;height:68px;background:#4a8ae6;border-radius:14px 0 0 0"></div><div style="position:absolute;left:388px;top:62px;font:4.5px/1 'Liberation Sans',sans-serif;white-space:pre;color:#fff;">12:31</div><div style="position:absolute;left:372px;top:126px;width:36px;height:222px;background:#fff;"></div><div style="position:absolute;left:360px;top:354px;width:48px;height:8px;background:#000;"></div><div style="position:absolute;left:0px;top:362px;width:408px;height:27px;background:#17191c;"></div><div style="position:absolute;left:22px;top:364px;width:320px;height:24px;background:#2a2d31;border-radius:6px;opacity:0.9"></div><div style="position:absolute;left:26.0px;top:366px;width:16px;height:17px;background:#4d9bf0;border-radius:4px"></div><div style="position:absolute;left:46.2px;top:366px;width:16px;height:17px;background:#d0d4dc;border-radius:4px"></div><div style="position:absolute;left:66.4px;top:366px;width:16px;height:17px;background:#f2f2f2;border-radius:4px"></div><div style="position:absolute;left:86.6px;top:366px;width:16px;height:17px;background:#9a9ea8;border-radius:4px"></div><div style="position:absolute;left:106.8px;top:366px;width:16px;height:17px;background:#f4e9a8;border-radius:4px"></div><div style="position:absolute;left:127.0px;top:366px;width:16px;height:17px;background:#5aa0ef;border-radius:4px"></div><div style="position:absolute;left:147.2px;top:366px;width:16px;height:17px;background:#3d8ff0;border-radius:4px"></div><div style="position:absolute;left:167.4px;top:366px;width:16px;height:17px;background:#ffffff;border-radius:4px"></div><div style="position:absolute;left:187.6px;top:366px;width:16px;height:17px;background:#111;border-radius:4px"></div><div style="position:absolute;left:207.79999999999998px;top:366px;width:16px;height:17px;background:#e9ecef;border-radius:4px"></div><div style="position:absolute;left:228.0px;top:366px;width:16px;height:17px;background:#2f7fe0;border-radius:4px"></div><div style="position:absolute;left:248.2px;top:366px;width:16px;height:17px;background:#ee6a3c;border-radius:4px"></div><div style="position:absolute;left:268.4px;top:366px;width:16px;height:17px;background:#3f7de8;border-radius:4px"></div><div style="position:absolute;left:288.59999999999997px;top:366px;width:16px;height:17px;background:#3355dd;border-radius:4px"></div><div style="position:absolute;left:308.8px;top:366px;width:16px;height:17px;background:#d8d8d8;border-radius:4px"></div><div style="position:absolute;left:329.0px;top:366px;width:16px;height:17px;background:#444;border-radius:4px"></div><div style="position:absolute;left:349.2px;top:366px;width:16px;height:17px;background:#666;border-radius:4px"></div></div><div style="position:absolute;left:1469px;top:711px;width:72px;height:72px;border-radius:50%;background:#f2f4fa"></div><svg style="position:absolute;left:1497px;top:734px" width="22" height="26" viewBox="0 0 22 26"><path d="M1 0 L21 12.5 L1 25 Z" fill="#5b6bd0"/></svg><div style="position:absolute;left:1577px;top:892px;width:122px;height:39px;background:#fff;border-radius:20px"></div><div class="t" style="left:1638px;transform:translateX(-50%);top:898.49px;font-size:26px;color:#212529;font-weight:400;letter-spacing:-0.3px;-webkit-text-stroke:0.5px #212529;">00:12:49</div><div class="t" style="left:1331px;top:981.62px;font-size:34px;color:#212529;font-weight:700;letter-spacing:0px;">Scroll views-</div><div class="t" style="left:1331px;top:1023.42px;font-size:34px;color:#212529;font-weight:700;letter-spacing:0px;">CustomScroll view &amp;</div><div class="t" style="left:1331px;top:1065.22px;font-size:34px;color:#212529;font-weight:700;letter-spacing:0px;">Sliver</div><div class="t" style="left:1331px;top:1143.90px;font-size:28px;color:#6c757d;font-weight:400;letter-spacing:0.75px;">a month ago</div><div style="position:absolute;left:1752px;top:553px;width:408px;height:704px;background:#fff;border-radius:20px;box-shadow:0 6px 18px rgba(0,0,0,0.05)"></div><div style="position:absolute;left:1752px;top:553px;width:408px;height:389px;border-radius:20px;overflow:hidden;background:#1c1e29"><div style="position:absolute;left:0px;top:0px;width:408px;height:389px;background:#0d1016;"></div><div style="position:absolute;left:0px;top:0px;width:392px;height:17px;background:#0b0d12;"></div><div style="position:absolute;left:0px;top:5px;font:5.2px/1 'Liberation Sans',sans-serif;white-space:pre;color:#d8d9de;">nal   Help            Tab_bar.dart - academy_project2 - Visual Studio Code</div><div style="position:absolute;left:290px;top:5px;width:6px;height:6px;background:#c8cad0;opacity:0.55"></div><div style="position:absolute;left:300px;top:5px;width:6px;height:6px;background:#c8cad0;opacity:0.55"></div><div style="position:absolute;left:310px;top:5px;width:6px;height:6px;background:#c8cad0;opacity:0.55"></div><div style="position:absolute;left:322px;top:5px;width:6px;height:6px;background:#c8cad0;opacity:0.55"></div><div style="position:absolute;left:340px;top:5px;width:6px;height:6px;background:#c8cad0;opacity:0.55"></div><div style="position:absolute;left:358px;top:5px;width:6px;height:6px;background:#c8cad0;opacity:0.55"></div><div style="position:absolute;left:377px;top:5px;width:6px;height:6px;background:#c8cad0;opacity:0.55"></div><div style="position:absolute;left:0px;top:17px;width:392px;height:17px;background:#10131a;"></div><div style="position:absolute;left:26px;top:22px;font:4.8px/1 'Liberation Sans',sans-serif;white-space:pre;color:#5c6270;">◉ tricks_and_tips.dart        ◉ main.dart          ◉ single_child_scroll_view.dart         ◉ tab_bar.d</div><div style="position:absolute;left:250px;top:32px;width:60px;height:2px;background:#e07030;"></div><div style="position:absolute;left:297px;top:20px;width:6px;height:8px;background:#8ab4f8;opacity:0.65"></div><div style="position:absolute;left:309px;top:20px;width:6px;height:8px;background:#8ab4f8;opacity:0.65"></div><div style="position:absolute;left:321px;top:20px;width:6px;height:8px;background:#8ab4f8;opacity:0.65"></div><div style="position:absolute;left:333px;top:20px;width:6px;height:8px;background:#8ab4f8;opacity:0.65"></div><div style="position:absolute;left:345px;top:20px;width:6px;height:8px;background:#f0c040;opacity:0.65"></div><div style="position:absolute;left:357px;top:20px;width:6px;height:8px;background:#50d070;opacity:0.65"></div><div style="position:absolute;left:369px;top:20px;width:6px;height:8px;background:#e05050;opacity:0.65"></div><div style="position:absolute;left:381px;top:20px;width:6px;height:8px;background:#8ab4f8;opacity:0.65"></div><div style="position:absolute;left:2px;top:35px;font:4.8px/1 'Liberation Sans',sans-serif;white-space:pre;color:#676d7a;">b_bar.dart &gt; ⚙ TabBarScreen &gt; ⚙ build</div><div style="position:absolute;left:2px;top:44.0px;font:5.8px/1 'Liberation Mono',monospace;white-space:pre;color:#d4d4d4;opacity:0.85">@override</div><div style="position:absolute;left:2px;top:52.55px;font:5.8px/1 'Liberation Mono',monospace;white-space:pre;color:#4ec9b0;opacity:0.85">Widget </div><div style="position:absolute;left:26.36px;top:52.55px;font:5.8px/1 'Liberation Mono',monospace;white-space:pre;color:#dcdcaa;opacity:0.85">build</div><div style="position:absolute;left:43.76px;top:52.55px;font:5.8px/1 'Liberation Mono',monospace;white-space:pre;color:#4ec9b0;opacity:0.85">(BuildContext </div><div style="position:absolute;left:92.47999999999999px;top:52.55px;font:5.8px/1 'Liberation Mono',monospace;white-space:pre;color:#9cdcfe;opacity:0.85">context</div><div style="position:absolute;left:116.83999999999999px;top:52.55px;font:5.8px/1 'Liberation Mono',monospace;white-space:pre;color:#d4d4d4;opacity:0.85">) {</div><div style="position:absolute;left:2px;top:61.1px;font:5.8px/1 'Liberation Mono',monospace;white-space:pre;color:#c586c0;opacity:0.85">  return </div><div style="position:absolute;left:33.32px;top:61.1px;font:5.8px/1 'Liberation Mono',monospace;white-space:pre;color:#4ec9b0;opacity:0.85">DefaultTabController(</div><div style="position:absolute;left:2px;top:69.65px;font:5.8px/1 'Liberation Mono',monospace;white-space:pre;color:#9cdcfe;opacity:0.85">    length: </div><div style="position:absolute;left:43.76px;top:69.65px;font:5.8px/1 'Liberation Mono',monospace;white-space:pre;color:#b5cea8;opacity:0.85">5,</div><div style="position:absolute;left:2px;top:78.2px;font:5.8px/1 'Liberation Mono',monospace;white-space:pre;color:#9cdcfe;opacity:0.85">    child: </div><div style="position:absolute;left:40.28px;top:78.2px;font:5.8px/1 'Liberation Mono',monospace;white-space:pre;color:#4ec9b0;opacity:0.85">Scaffold(</div><div style="position:absolute;left:2px;top:86.75px;font:5.8px/1 'Liberation Mono',monospace;white-space:pre;color:#9cdcfe;opacity:0.85">      appBar: </div><div style="position:absolute;left:50.72px;top:86.75px;font:5.8px/1 'Liberation Mono',monospace;white-space:pre;color:#4ec9b0;opacity:0.85">AppBar(</div><div style="position:absolute;left:2px;top:95.30000000000001px;font:5.8px/1 'Liberation Mono',monospace;white-space:pre;color:#9cdcfe;opacity:0.85">        bottom: </div><div style="position:absolute;left:57.68px;top:95.30000000000001px;font:5.8px/1 'Liberation Mono',monospace;white-space:pre;color:#4ec9b0;opacity:0.85">PreferredSize(</div><div style="position:absolute;left:2px;top:103.85000000000001px;font:5.8px/1 'Liberation Mono',monospace;white-space:pre;color:#9cdcfe;opacity:0.85">          preferredSize: </div><div style="position:absolute;left:89.0px;top:103.85000000000001px;font:5.8px/1 'Liberation Mono',monospace;white-space:pre;color:#4ec9b0;opacity:0.85">Size.fromHeight(5),</div><div style="position:absolute;left:2px;top:112.4px;font:5.8px/1 'Liberation Mono',monospace;white-space:pre;color:#9cdcfe;opacity:0.85">          child: </div><div style="position:absolute;left:61.16px;top:112.4px;font:5.8px/1 'Liberation Mono',monospace;white-space:pre;color:#4ec9b0;opacity:0.85">Column(</div><div style="position:absolute;left:2px;top:120.95px;font:5.8px/1 'Liberation Mono',monospace;white-space:pre;color:#9cdcfe;opacity:0.85">            children: [</div><div style="position:absolute;left:2px;top:129.5px;font:5.8px/1 'Liberation Mono',monospace;white-space:pre;color:#4ec9b0;opacity:0.85">              Text(</div><div style="position:absolute;left:68.12px;top:129.5px;font:5.8px/1 'Liberation Mono',monospace;white-space:pre;color:#ce9178;opacity:0.85">&#x27;Applylab academy&#x27;</div><div style="position:absolute;left:130.76px;top:129.5px;font:5.8px/1 'Liberation Mono',monospace;white-space:pre;color:#d4d4d4;opacity:0.85">),</div><div style="position:absolute;left:2px;top:138.05px;font:5.8px/1 'Liberation Mono',monospace;white-space:pre;color:#4ec9b0;opacity:0.85">              TabBar(</div><div style="position:absolute;left:75.08px;top:138.05px;font:5.8px/1 'Liberation Mono',monospace;white-space:pre;color:#9cdcfe;opacity:0.85">isScrollable: true, tabs: [</div><div style="position:absolute;left:2px;top:146.60000000000002px;font:5.8px/1 'Liberation Mono',monospace;white-space:pre;color:#4ec9b0;opacity:0.85">                Tab(</div><div style="position:absolute;left:2px;top:155.15px;font:5.8px/1 'Liberation Mono',monospace;white-space:pre;color:#9cdcfe;opacity:0.85">                  text: </div><div style="position:absolute;left:85.52px;top:155.15px;font:5.8px/1 'Liberation Mono',monospace;white-space:pre;color:#ce9178;opacity:0.85">&#x27;home&#x27;,</div><div style="position:absolute;left:2px;top:163.70000000000002px;font:5.8px/1 'Liberation Mono',monospace;white-space:pre;color:#d4d4d4;opacity:0.85">                ), </div><div style="position:absolute;left:68.12px;top:163.70000000000002px;font:5.8px/1 'Liberation Mono',monospace;white-space:pre;color:#6a6a6a;opacity:0.85">// Tab</div><div style="position:absolute;left:2px;top:172.25px;font:5.8px/1 'Liberation Mono',monospace;white-space:pre;color:#4ec9b0;opacity:0.85">                Tab(</div><div style="position:absolute;left:2px;top:180.8px;font:5.8px/1 'Liberation Mono',monospace;white-space:pre;color:#9cdcfe;opacity:0.85">                  text: </div><div style="position:absolute;left:85.52px;top:180.8px;font:5.8px/1 'Liberation Mono',monospace;white-space:pre;color:#ce9178;opacity:0.85">&#x27;abc&#x27;,</div><div style="position:absolute;left:2px;top:189.35000000000002px;font:5.8px/1 'Liberation Mono',monospace;white-space:pre;color:#d4d4d4;opacity:0.85">                ), </div><div style="position:absolute;left:68.12px;top:189.35000000000002px;font:5.8px/1 'Liberation Mono',monospace;white-space:pre;color:#6a6a6a;opacity:0.85">// Tab</div><div style="position:absolute;left:2px;top:197.9px;font:5.8px/1 'Liberation Mono',monospace;white-space:pre;color:#4ec9b0;opacity:0.85">                Tab(</div><div style="position:absolute;left:2px;top:206.45000000000002px;font:5.8px/1 'Liberation Mono',monospace;white-space:pre;color:#9cdcfe;opacity:0.85">                  text: </div><div style="position:absolute;left:85.52px;top:206.45000000000002px;font:5.8px/1 'Liberation Mono',monospace;white-space:pre;color:#ce9178;opacity:0.85">&#x27;car&#x27;,</div><div style="position:absolute;left:2px;top:215.0px;font:5.8px/1 'Liberation Mono',monospace;white-space:pre;color:#d4d4d4;opacity:0.85">                ), </div><div style="position:absolute;left:68.12px;top:215.0px;font:5.8px/1 'Liberation Mono',monospace;white-space:pre;color:#6a6a6a;opacity:0.85">// Tab</div><div style="position:absolute;left:2px;top:223.55px;font:5.8px/1 'Liberation Mono',monospace;white-space:pre;color:#4ec9b0;opacity:0.85">                Tab(</div><div style="position:absolute;left:2px;top:232.10000000000002px;font:5.8px/1 'Liberation Mono',monospace;white-space:pre;color:#9cdcfe;opacity:0.85">                  text: </div><div style="position:absolute;left:85.52px;top:232.10000000000002px;font:5.8px/1 'Liberation Mono',monospace;white-space:pre;color:#ce9178;opacity:0.85">&#x27;unit&#x27;,</div><div style="position:absolute;left:2px;top:240.65px;font:5.8px/1 'Liberation Mono',monospace;white-space:pre;color:#d4d4d4;opacity:0.85">                ), </div><div style="position:absolute;left:68.12px;top:240.65px;font:5.8px/1 'Liberation Mono',monospace;white-space:pre;color:#6a6a6a;opacity:0.85">// Tab</div><div style="position:absolute;left:2px;top:249.20000000000002px;font:5.8px/1 'Liberation Mono',monospace;white-space:pre;color:#4ec9b0;opacity:0.85">                Tab(</div><div style="position:absolute;left:2px;top:257.75px;font:5.8px/1 'Liberation Mono',monospace;white-space:pre;color:#9cdcfe;opacity:0.85">                  text: </div><div style="position:absolute;left:85.52px;top:257.75px;font:5.8px/1 'Liberation Mono',monospace;white-space:pre;color:#ce9178;opacity:0.85">&#x27;alarm&#x27;,</div><div style="position:absolute;left:2px;top:266.3px;font:5.8px/1 'Liberation Mono',monospace;white-space:pre;color:#d4d4d4;opacity:0.85">                ), </div><div style="position:absolute;left:68.12px;top:266.3px;font:5.8px/1 'Liberation Mono',monospace;white-space:pre;color:#6a6a6a;opacity:0.85">// Tab</div><div style="position:absolute;left:0px;top:136.0px;width:90px;height:0.8px;background:#3b6fd6;opacity:0.45"></div><div style="position:absolute;left:0px;top:144.55px;width:120px;height:0.8px;background:#3b6fd6;opacity:0.45"></div><div style="position:absolute;left:0px;top:153.10000000000002px;width:60px;height:0.8px;background:#3b6fd6;opacity:0.45"></div><div style="position:absolute;left:0px;top:161.65px;width:90px;height:0.8px;background:#3b6fd6;opacity:0.45"></div><div style="position:absolute;left:0px;top:170.20000000000002px;width:120px;height:0.8px;background:#3b6fd6;opacity:0.45"></div><div style="position:absolute;left:0px;top:178.75px;width:60px;height:0.8px;background:#3b6fd6;opacity:0.45"></div><div style="position:absolute;left:0px;top:187.3px;width:90px;height:0.8px;background:#3b6fd6;opacity:0.45"></div><div style="position:absolute;left:0px;top:195.85000000000002px;width:120px;height:0.8px;background:#3b6fd6;opacity:0.45"></div><div style="position:absolute;left:0px;top:204.4px;width:60px;height:0.8px;background:#3b6fd6;opacity:0.45"></div><div style="position:absolute;left:0px;top:212.95000000000002px;width:90px;height:0.8px;background:#3b6fd6;opacity:0.45"></div><div style="position:absolute;left:0px;top:221.5px;width:120px;height:0.8px;background:#3b6fd6;opacity:0.45"></div><div style="position:absolute;left:0px;top:230.05px;width:60px;height:0.8px;background:#3b6fd6;opacity:0.45"></div><div style="position:absolute;left:0px;top:238.60000000000002px;width:90px;height:0.8px;background:#3b6fd6;opacity:0.45"></div><div style="position:absolute;left:0px;top:247.15px;width:120px;height:0.8px;background:#3b6fd6;opacity:0.45"></div><div style="position:absolute;left:0px;top:255.70000000000002px;width:60px;height:0.8px;background:#3b6fd6;opacity:0.45"></div><div style="position:absolute;left:0px;top:264.25px;width:90px;height:0.8px;background:#3b6fd6;opacity:0.45"></div><div style="position:absolute;left:0px;top:272.8px;width:120px;height:0.8px;background:#3b6fd6;opacity:0.45"></div><div style="position:absolute;left:270px;top:44px;width:1px;height:230px;background:#20242c;"></div><div style="position:absolute;left:346px;top:45px;width:10px;height:1.2px;background:#9cdcfe;opacity:0.35"></div><div style="position:absolute;left:348px;top:48px;width:17px;height:1.2px;background:#9cdcfe;opacity:0.35"></div><div style="position:absolute;left:350px;top:51px;width:10px;height:1.2px;background:#9cdcfe;opacity:0.35"></div><div style="position:absolute;left:352px;top:54px;width:17px;height:1.2px;background:#9cdcfe;opacity:0.35"></div><div style="position:absolute;left:346px;top:57px;width:10px;height:1.2px;background:#9cdcfe;opacity:0.35"></div><div style="position:absolute;left:348px;top:60px;width:17px;height:1.2px;background:#9cdcfe;opacity:0.35"></div><div style="position:absolute;left:350px;top:63px;width:10px;height:1.2px;background:#9cdcfe;opacity:0.35"></div><div style="position:absolute;left:352px;top:66px;width:17px;height:1.2px;background:#9cdcfe;opacity:0.35"></div><div style="position:absolute;left:346px;top:69px;width:10px;height:1.2px;background:#9cdcfe;opacity:0.35"></div><div style="position:absolute;left:348px;top:72px;width:17px;height:1.2px;background:#9cdcfe;opacity:0.35"></div><div style="position:absolute;left:350px;top:75px;width:10px;height:1.2px;background:#9cdcfe;opacity:0.35"></div><div style="position:absolute;left:352px;top:78px;width:17px;height:1.2px;background:#9cdcfe;opacity:0.35"></div><div style="position:absolute;left:389px;top:40px;width:2px;height:80px;background:#2a5cc0;opacity:0.6"></div><div style="position:absolute;left:0px;top:275px;width:392px;height:12px;background:#0d1016;"></div><div style="position:absolute;left:0px;top:274px;width:392px;height:1px;background:#2a2e36;"></div><div style="position:absolute;left:3px;top:279px;font:4.6px/1 'Liberation Sans',sans-serif;white-space:pre;color:#8a8f9a;">DEBUG CONSOLE      TERMINAL      PROBLEMS</div><div style="position:absolute;left:116px;top:278px;width:9px;height:7px;background:#8a6a20;border-radius:50%"></div><div style="position:absolute;left:172px;top:278px;width:180px;height:7px;background:#12151c;border:0.5px solid #2a2e36"></div><div style="position:absolute;left:0px;top:288.0px;font:5.7px/1 'Liberation Mono',monospace;white-space:pre;color:#5a8ef0;">er applying a flex factor (e.g. using an Expanded widget) to force the children of the RenderFlex to fit within</div><div style="position:absolute;left:0px;top:296.85px;font:5.7px/1 'Liberation Mono',monospace;white-space:pre;color:#5a8ef0;">ailable space instead of being sized to their natural size.</div><div style="position:absolute;left:0px;top:305.7px;font:5.7px/1 'Liberation Mono',monospace;white-space:pre;color:#5a8ef0;">s considered an error condition because it indicates that there is content that cannot be seen. If the content</div><div style="position:absolute;left:0px;top:314.55px;font:5.7px/1 'Liberation Mono',monospace;white-space:pre;color:#5a8ef0;">ltimately bigger than the available space, consider clipping it with a ClipRect widget before putting it in the</div><div style="position:absolute;left:0px;top:323.4px;font:5.7px/1 'Liberation Mono',monospace;white-space:pre;color:#5a8ef0;">r using a scrollable container rather than a Flex, like a ListView.</div><div style="position:absolute;left:0px;top:332.25px;font:5.7px/1 'Liberation Mono',monospace;white-space:pre;color:#5a8ef0;"></div><div style="position:absolute;left:0px;top:341.1px;font:5.7px/1 'Liberation Mono',monospace;white-space:pre;color:#5a8ef0;">ecific RenderFlex in question is: RenderFlex#c2fbe relayoutBoundary=up9 OVERFLOWING</div><div style="position:absolute;left:0px;top:349.95px;font:5.7px/1 'Liberation Mono',monospace;white-space:pre;color:#5a8ef0;"></div><div style="position:absolute;left:0px;top:358.8px;font:5.7px/1 'Liberation Mono',monospace;white-space:pre;color:#5a8ef0;">ed 1 of 837 libraries in 940ms (compile: 58 ms, reload: 448 ms, reassemble: 342 ms).</div><div style="position:absolute;left:0px;top:350px;width:255px;height:1px;background:#c03030;"></div><div style="position:absolute;left:95px;top:379px;font:4.4px/1 'Liberation Sans',sans-serif;white-space:pre;color:#5f6674;">Ln 16, Col 43    Spaces: 2    UTF-8    CRLF    {} Dart    ⦿ Go Live    Pixel 3 XL API 33 (android-x86 emulator)</div><div style="position:absolute;left:392px;top:0px;width:16px;height:389px;background:linear-gradient(180deg,#5b8de8 0%,#3a66d8 20%,#1c2f90 55%,#2f5ad0 75%,#8fb0e0 100%);"></div><div style="position:absolute;left:395px;top:8px;width:13px;height:290px;background:#0a0a0c;border-radius:8px 0 0 8px"></div><div style="position:absolute;left:0px;top:383px;width:392px;height:6px;background:linear-gradient(90deg,#2748c8,#16226a 35%,#3463d8 60%,#0f1a50 80%,#2a4ac0);"></div><div style="position:absolute;left:330px;top:320px;width:78px;height:69px;background:radial-gradient(ellipse at 100% 100%, #b4c6e0 0%, rgba(120,150,220,0.7) 30%, rgba(40,80,200,0) 70%);"></div></div><div style="position:absolute;left:1920px;top:711px;width:72px;height:72px;border-radius:50%;background:#f2f4fa"></div><svg style="position:absolute;left:1948px;top:734px" width="22" height="26" viewBox="0 0 22 26"><path d="M1 0 L21 12.5 L1 25 Z" fill="#5b6bd0"/></svg><div style="position:absolute;left:2029px;top:892px;width:122px;height:39px;background:#fff;border-radius:20px"></div><div class="t" style="left:2090px;transform:translateX(-50%);top:898.49px;font-size:26px;color:#212529;font-weight:400;letter-spacing:-0.3px;-webkit-text-stroke:0.5px #212529;">00:13:36</div><div class="t" style="left:1782px;top:981.62px;font-size:34px;color:#212529;font-weight:700;letter-spacing:0px;">Scroll views-</div><div class="t" style="left:1782px;top:1023.42px;font-size:34px;color:#212529;font-weight:700;letter-spacing:0px;">SingleChildScrollVie</div><div class="t" style="left:1782px;top:1065.22px;font-size:34px;color:#212529;font-weight:700;letter-spacing:0px;">w &amp;</div><div class="t" style="left:1782px;top:1107.02px;font-size:34px;color:#212529;font-weight:700;letter-spacing:0px;">NestedScrollView</div><div class="t" style="left:1782px;top:1185.90px;font-size:28px;color:#6c757d;font-weight:400;letter-spacing:0.75px;">a month ago</div><svg style="position:absolute;left:2787px;top:1484px" width="51" height="51" viewBox="0 0 51 51"><circle cx="25.5" cy="25.5" r="24.5" fill="#13315f"/><path d="M11 21 L25.5 13 L40 21 L25.5 29 Z" stroke="#fff" stroke-width="2.2" fill="none" stroke-linejoin="round"/><path d="M13 25.5 L11 26.5 L25.5 34.5 L40 26.5 L38 25.5" stroke="#fff" stroke-width="2.2" fill="none" stroke-linejoin="round"/><path d="M13 31 L11 32 L25.5 40 L40 32 L38 31" stroke="#fff" stroke-width="2.2" fill="none" stroke-linejoin="round"/></svg><div style="position:absolute;left:12px;top:344px;width:581px;height:404px;border:15px solid #e8402a;box-sizing:border-box"></div>
</body></html>
